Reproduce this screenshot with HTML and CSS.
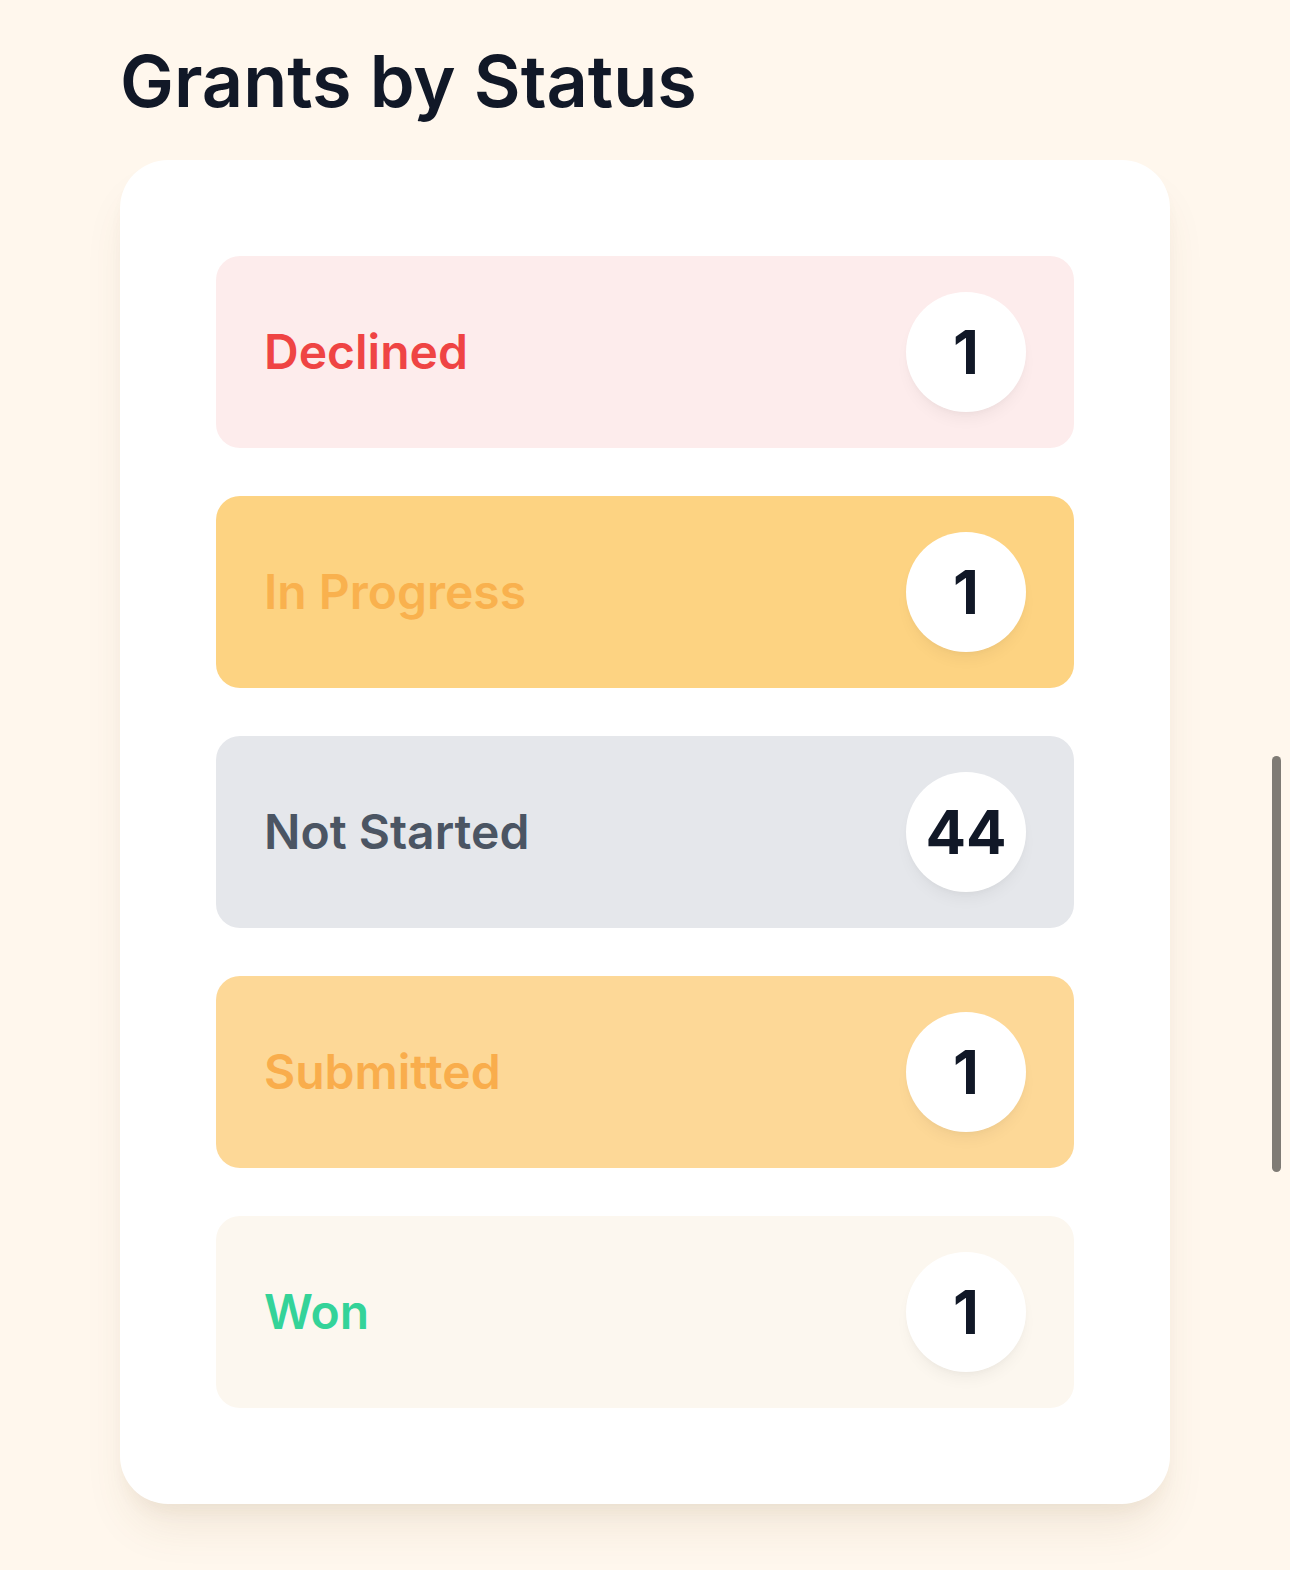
FILE: index.html
```html
<!DOCTYPE html>
<html lang="en">
<head>
<meta charset="utf-8">
<title>Grants by Status</title>
<link rel="stylesheet" href="styles.css">
</head>
<body>
<main class="page">
  <h1 class="title">Grants by Status</h1>
  <section class="card">
    <div class="row row-declined">
      <span class="label">Declined</span>
      <span class="count">1</span>
    </div>
    <div class="row row-progress">
      <span class="label">In Progress</span>
      <span class="count">1</span>
    </div>
    <div class="row row-notstarted">
      <span class="label">Not Started</span>
      <span class="count">44</span>
    </div>
    <div class="row row-submitted">
      <span class="label">Submitted</span>
      <span class="count">1</span>
    </div>
    <div class="row row-won">
      <span class="label">Won</span>
      <span class="count">1</span>
    </div>
  </section>
</main>
<div class="scroll-thumb"></div>
</body>
</html>
```

FILE: styles.css
```css
html, body {
  margin: 0;
  padding: 0;
}
body {
  background: #FFF7ED;
  font-family: Inter, "Noto Sans", sans-serif;
  color: #111827;
  min-height: 1570px;
  overflow: hidden;
}
.page {
  padding: 33px 120px 0 120px;
}
.title {
  margin: 0 0 31px;
  font-size: 72px;
  line-height: 96px;
  font-weight: 600;
  color: #111827;
}
.card {
  background: #ffffff;
  border-radius: 48px;
  padding: 96px;
  display: flex;
  flex-direction: column;
  gap: 48px;
  box-shadow: 0 30px 45px -9px rgba(120, 90, 40, 0.10), 0 12px 18px -6px rgba(120, 90, 40, 0.06);
}
.row {
  display: flex;
  align-items: center;
  justify-content: space-between;
  padding: 36px 48px;
  border-radius: 24px;
}
.label {
  font-size: 48px;
  line-height: 72px;
  font-weight: 600;
}
.count {
  width: 120px;
  height: 120px;
  border-radius: 50%;
  background: #ffffff;
  display: flex;
  align-items: center;
  justify-content: center;
  font-size: 60px;
  font-weight: 700;
  color: #111827;
  box-shadow: 0 10px 16px -4px rgba(0, 0, 0, 0.05), 0 3px 6px -2px rgba(0, 0, 0, 0.03);
}
.row-declined { background: #FDECEC; }
.row-declined .label { color: #EF4444; }
.row-progress { background: #FDD382; }
.row-progress .label { color: #F9B14E; }
.row-notstarted { background: #E5E7EB; }
.row-notstarted .label { color: #4B5563; }
.row-submitted { background: #FDD897; }
.row-submitted .label { color: #F9AD4C; }
.row-won { background: #FCF7EF; }
.row-won .label { color: #34D399; }
.scroll-thumb {
  position: fixed;
  left: 1272px;
  top: 756px;
  width: 9px;
  height: 416px;
  border-radius: 5px;
  background: #7F7B75;
}
```
